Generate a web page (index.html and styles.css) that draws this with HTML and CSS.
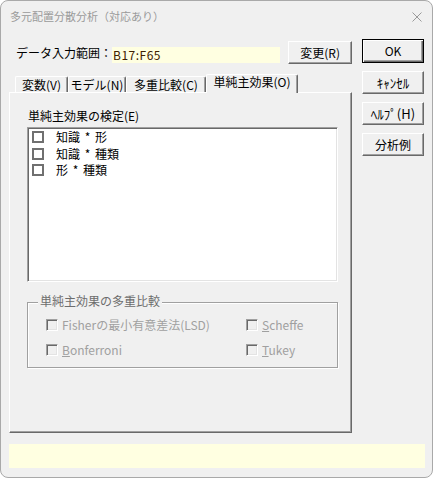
FILE: index.html
```html
<!DOCTYPE html>
<html lang="ja">
<head>
<meta charset="utf-8">
<title>多元配置分散分析（対応あり）</title>
<link rel="stylesheet" href="styles.css">
</head>
<body>
<div class="window">
  <div class="titlebar">
    <span class="title">多元配置分散分析（対応あり）</span>
    <svg class="close" viewBox="0 0 10 10" width="10" height="10"><path d="M0.5 0.5L9.5 9.5M9.5 0.5L0.5 9.5" stroke="#9a9a9a" stroke-width="1" fill="none"/></svg>
  </div>
  <div class="client">
    <div class="main">
      <div class="left">
        <div class="range-row">
          <span class="range-label">データ入力範囲：</span>
          <span class="range-field">B17:F65</span>
          <button class="btn btn-change">変更(R)</button>
        </div>
        <div class="tabs">
          <div class="tab tab-vars">変数(V)</div>
          <div class="tab tab-model">モデル(N)</div>
          <div class="tab tab-multi">多重比較(C)</div>
          <div class="tab tab-simple active">単純主効果(O)</div>
        </div>
        <div class="panel">
          <div class="list-label">単純主効果の検定(E)</div>
          <div class="listbox">
            <div class="list-item"><span class="lb-check"></span><span>知識 * 形</span></div>
            <div class="list-item"><span class="lb-check"></span><span>知識 * 種類</span></div>
            <div class="list-item"><span class="lb-check"></span><span>形 * 種類</span></div>
          </div>
          <div class="group">
            <span class="legend">単純主効果の多重比較</span>
            <div class="group-grid">
              <div class="dcheck"><span class="dbox"></span><span>Fisherの最小有意差法(LSD)</span></div>
              <div class="dcheck"><span class="dbox"></span><span><u>S</u>cheffe</span></div>
              <div class="dcheck"><span class="dbox"></span><span><u>B</u>onferroni</span></div>
              <div class="dcheck"><span class="dbox"></span><span><u>T</u>ukey</span></div>
            </div>
          </div>
        </div>
      </div>
      <div class="right">
        <button class="btn btn-side btn-ok">OK</button>
        <button class="btn btn-side btn-kana">ｷｬﾝｾﾙ</button>
        <button class="btn btn-side btn-kana">ﾍﾙﾌﾟ(H)</button>
        <button class="btn btn-side">分析例</button>
      </div>
    </div>
    <div class="status"></div>
  </div>
</div>
</body>
</html>
```

FILE: styles.css
```css
* { box-sizing: border-box; }
html, body { margin: 0; padding: 0; background: #ffffff; }
body {
  width: 433px;
  height: 478px;
  overflow: hidden;
  font-family: "Noto Sans CJK JP", "Noto Sans", sans-serif;
  font-size: 12px;
  color: #000;
}
.window {
  width: 433px;
  height: 478px;
  border: 1px solid #a9a9a9;
  border-radius: 8px;
  background: #f0f0f0;
  overflow: hidden;
}
.titlebar {
  height: 29px;
  display: flex;
  align-items: center;
  padding: 0 10px 0 9px;
}
.title {
  font-size: 11px;
  line-height: 14px;
  color: #9a9a9a;
}
.close {
  margin-left: auto;
  margin-top: 3px;
  display: block;
}
.client {
  padding: 0 7px 0 8px;
}
.main {
  display: flex;
  gap: 10px;
  padding-top: 9px;
}
.left {
  width: 343px;
  padding-top: 2px;
}
.range-row {
  display: flex;
  align-items: flex-start;
  height: 23px;
}
.range-label {
  width: 96px;
  margin-left: 7px;
  margin-top: 5px;
  line-height: 14px;
  white-space: nowrap;
}
.range-field {
  width: 169px;
  height: 16px;
  margin-top: 6px;
  background: #ffffe1;
  color: #402000;
  line-height: 16px;
  padding-left: 1px;
  letter-spacing: 0.5px;
}
.btn {
  font-family: inherit;
  font-size: 12px;
  line-height: 14px;
  color: #000;
  background: #f0f0f0;
  border: 1px solid;
  border-color: #ffffff #696969 #696969 #ffffff;
  box-shadow: inset -1px -1px #a0a0a0;
  padding: 0;
  margin: 0;
}
.btn-change {
  margin-left: 8px;
  width: 64px;
  height: 23px;
}
.tabs {
  display: flex;
  align-items: flex-end;
  height: 18px;
  margin-top: 10px;
  padding-left: 6px;
  position: relative;
  z-index: 1;
}
.tab {
  height: 16px;
  line-height: 15px;
  text-align: center;
  white-space: nowrap;
  border-top: 1px solid #ffffff;
  border-left: 1px solid #ffffff;
  border-right: 1px solid #696969;
  box-shadow: inset -1px 0 #a0a0a0;
  border-radius: 2px 2px 0 0;
  background: #f0f0f0;
}
.tab-vars { width: 53px; }
.tab-model { width: 58px; }
.tab-multi { width: 80px; }
.tab-simple { width: 92px; }
.tab.active {
  height: 19px;
  line-height: 14px;
  margin-bottom: -1px;
}
.panel {
  height: 341px;
  border-top: 1px solid #ffffff;
  border-left: 1px solid #ffffff;
  border-right: 1px solid #696969;
  border-bottom: 1px solid #696969;
  box-shadow: inset -1px -1px #a0a0a0;
  padding: 16px 13px 0 17px;
}
.list-label {
  line-height: 14px;
  margin-left: 1px;
}
.listbox {
  margin-top: 4px;
  height: 155px;
  background: #ffffff;
  border-top: 1px solid #a0a0a0;
  border-left: 1px solid #a0a0a0;
  border-right: 1px solid #ffffff;
  border-bottom: 1px solid #ffffff;
  box-shadow: inset 1px 1px #696969, inset -1px -1px #e3e3e3;
  padding: 1px 1px 1px 4px;
}
.list-item {
  height: 16.5px;
  display: flex;
  align-items: center;
  gap: 12px;
  line-height: 14px;
  white-space: pre;
  word-spacing: 2px;
}
.lb-check {
  flex: none;
  width: 12px;
  height: 12px;
  border: 2px solid #707070;
  background: #ffffff;
}
.group {
  margin-top: 20px;
  border: 1px solid #a0a0a0;
  box-shadow: inset 1px 1px #ffffff, 1px 1px #ffffff;
}
.legend {
  display: block;
  width: fit-content;
  margin: -9px 0 0 10px;
  padding: 0 2px;
  line-height: 14px;
  background: #f0f0f0;
  color: #6d6d6d;
}
.group-grid {
  display: grid;
  grid-template-columns: 200px auto;
  row-gap: 12px;
  margin: 10px 0 11px 18px;
}
.dcheck {
  display: flex;
  align-items: center;
  gap: 4px;
  height: 13px;
  line-height: 13px;
  color: #a0a0a0;
  white-space: nowrap;
}
.dbox {
  flex: none;
  width: 12px;
  height: 12px;
  border-top: 1px solid #a0a0a0;
  border-left: 1px solid #a0a0a0;
  border-right: 1px solid #ffffff;
  border-bottom: 1px solid #ffffff;
  box-shadow: inset 1px 1px #696969, inset -1px -1px #e3e3e3;
  background: #f0f0f0;
}
.right {
  width: 62px;
  display: flex;
  flex-direction: column;
  gap: 8px;
}
.btn-side {
  width: 62px;
  height: 23px;
}
.btn-kana {
  font-size: 13px;
}
.btn-ok {
  height: 24px;
  border: 1px solid #000000;
  box-shadow: inset 1px 1px #ffffff, inset -1px -1px #696969, inset -2px -2px #a0a0a0;
}
.status {
  margin-top: 11px;
  width: 416px;
  height: 24px;
  background: #ffffe1;
}
```
